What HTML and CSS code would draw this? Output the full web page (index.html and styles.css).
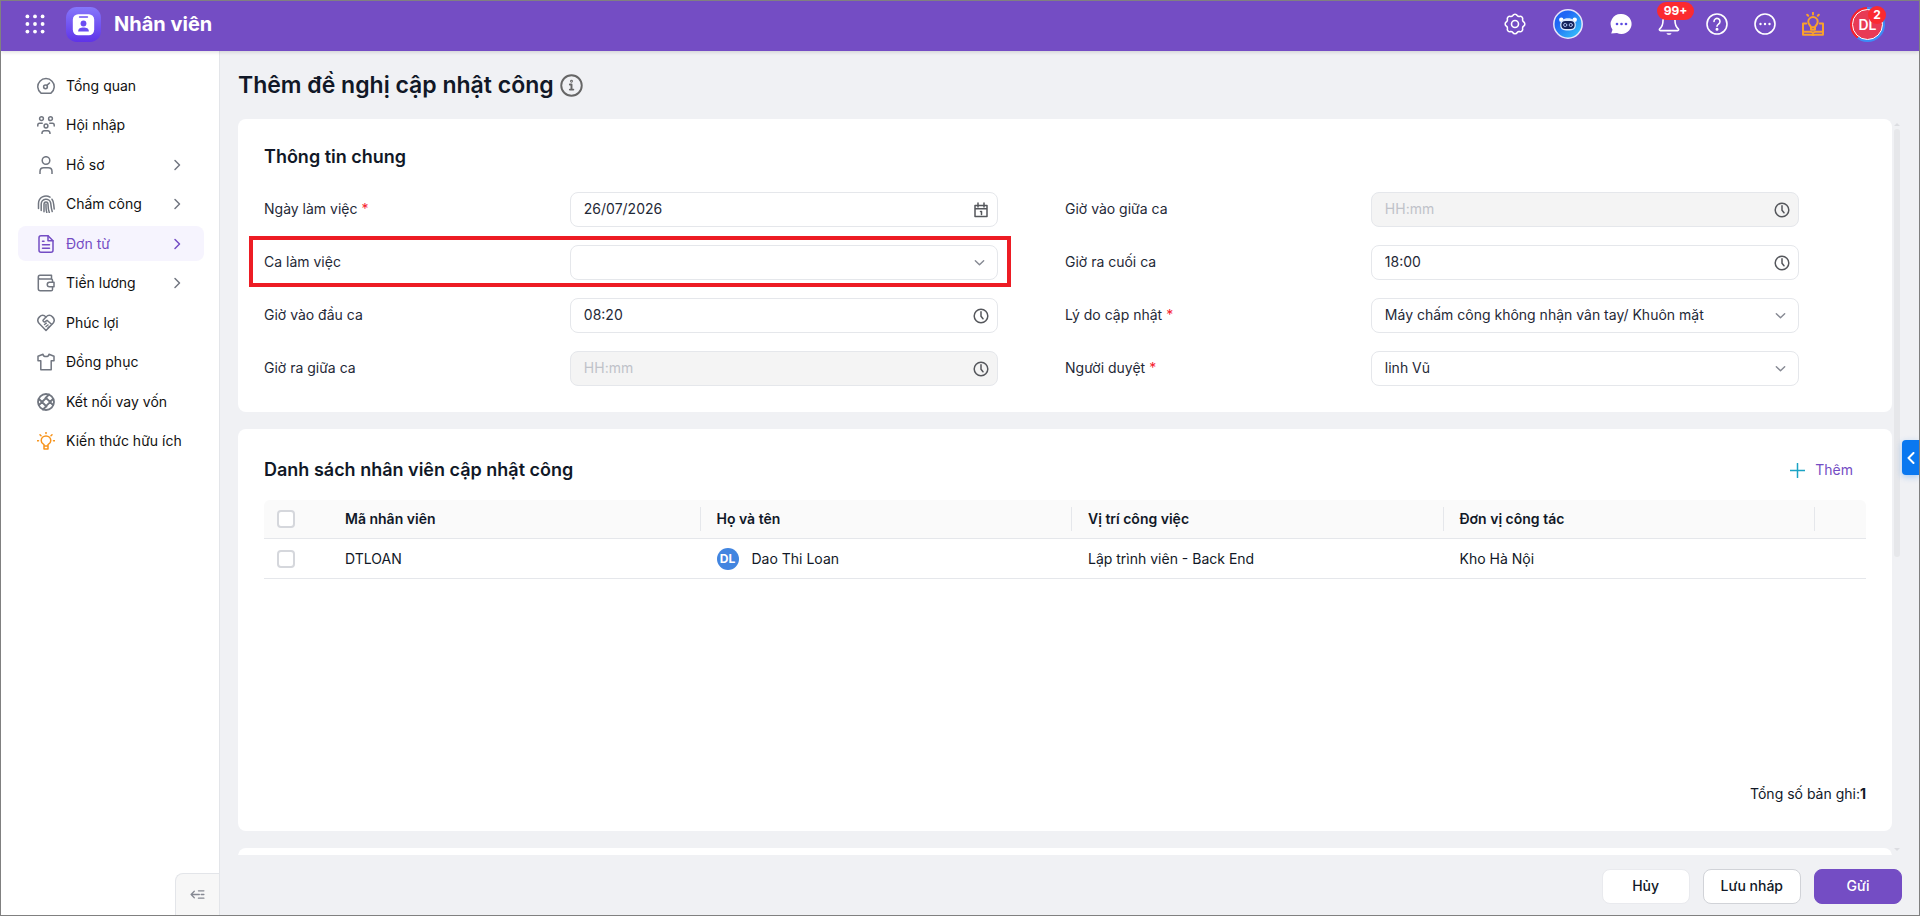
FILE: index.html
```
<!DOCTYPE html>
<html lang="vi">
<head>
    <meta charset="UTF-8">
    <meta name="viewport" content="width=device-width, initial-scale=1.0">
    <title>Thêm đề nghị cập nhật công</title>
    <link rel="stylesheet" href="styles.css">
</head>
<body>
    <!-- shared icons -->
    <svg class="sprite" aria-hidden="true">
        <symbol id="chevron-right" viewBox="0 0 14 14"><path d="M5 2.5 9.5 7 5 11.5"/></symbol>
        <symbol id="chevron-down" viewBox="0 0 14 14"><path d="M2.5 5 7 9.5 11.5 5"/></symbol>
        <symbol id="clock" viewBox="0 0 16 16"><circle cx="8" cy="8" r="6.8"/><path d="M8 3.8V8.2l2 2.6"/></symbol>
    </svg>

    <header class="header">
        <button class="icon-btn" aria-label="Ứng dụng">
            <svg class="dots" viewBox="0 0 20 20"><circle cx="2.4" cy="2.4" r="1.9"/><circle cx="10" cy="2.4" r="1.9"/><circle cx="17.6" cy="2.4" r="1.9"/><circle cx="2.4" cy="10" r="1.9"/><circle cx="10" cy="10" r="1.9"/><circle cx="17.6" cy="10" r="1.9"/><circle cx="2.4" cy="17.6" r="1.9"/><circle cx="10" cy="17.6" r="1.9"/><circle cx="17.6" cy="17.6" r="1.9"/></svg>
        </button>
        <svg class="app-logo" viewBox="0 0 36 36">
            <defs><linearGradient id="logoBg" x1="0" y1="0" x2="0" y2="1"><stop offset="0" stop-color="#8577fb"/><stop offset="1" stop-color="#5f33e8"/></linearGradient></defs>
            <rect width="36" height="36" rx="11" fill="url(#logoBg)"/>
            <rect x="7" y="7.5" width="22" height="21.5" rx="5.5" fill="#fff"/>
            <path d="M14 10.3h8" stroke="#6b4df2" stroke-width="1.6" stroke-linecap="round"/>
            <circle cx="18" cy="17" r="3" fill="#6b4df2"/>
            <path d="M12.5 25.2c0-3.400 2.500-4.200 5.500-4.200s5.500.8 5.500 4.200z" fill="#6b4df2"/>
        </svg>
        <span class="app-name">Nhân viên</span>

        <div class="header-actions">
            <button class="icon-btn" aria-label="Thiết lập">
                <svg viewBox="0 0 22 22"><path d="M8.800 2.500a2.500 2.500 0 0 1 4.400 0 2.400 2.400 0 0 0 2.300.9 2.500 2.500 0 0 1 3.100 3.100 2.400 2.400 0 0 0 .9 2.300 2.500 2.500 0 0 1 0 4.400 2.400 2.400 0 0 0-.9 2.300 2.500 2.500 0 0 1-3.100 3.100 2.400 2.400 0 0 0-2.300.9 2.500 2.500 0 0 1-4.400 0 2.400 2.400 0 0 0-2.300-.9 2.500 2.500 0 0 1-3.100-3.100 2.400 2.400 0 0 0-.9-2.300 2.500 2.500 0 0 1 0-4.400 2.400 2.400 0 0 0 .9-2.300 2.500 2.500 0 0 1 3.100-3.100 2.400 2.400 0 0 0 2.300-.9z"/><circle cx="11" cy="11" r="3.500"/></svg>
            </button>
            <button class="icon-btn bot" aria-label="Trợ lý">
                <svg viewBox="0 0 30 30">
                    <defs><linearGradient id="botBg" x1="0" y1="0" x2="1" y2="1"><stop offset=".3" stop-color="#1f66f5"/><stop offset="1" stop-color="#38d0fb"/></linearGradient></defs>
                    <circle cx="15" cy="15" r="14.200" fill="url(#botBg)" stroke="#e8e6fb" stroke-width="1.500"/>
                    <g stroke="none">
                        <circle cx="8.300" cy="10.800" r="2.200" fill="#fff"/><circle cx="21.700" cy="10.800" r="2.200" fill="#fff"/>
                        <path d="M7.200 16c0-4.500 3-6.800 7.800-6.800s7.800 2.300 7.800 6.800-3 5.500-7.800 5.500-7.800-1-7.800-5.500z" fill="#dbeafe"/>
                        <rect x="8.400" y="12" width="13.200" height="8" rx="4" fill="#14225a"/>
                    </g>
                    <circle cx="12.200" cy="16" r="1.600" stroke="#a5b9e8"/><circle cx="17.800" cy="16" r="1.600" stroke="#a5b9e8"/>
                </svg>
            </button>
            <button class="icon-btn" aria-label="Trò chuyện">
                <svg viewBox="0 0 22 22"><path d="M11.500 1A10 10 0 1 1 7 19.900L1.200 20.600l1.300-3.900A10 10 0 0 1 11.500 1z" fill="#fff" stroke="none"/><g fill="#5b4be0" stroke="none"><circle cx="7" cy="11" r="1.300"/><circle cx="11.500" cy="11" r="1.300"/><circle cx="16" cy="11" r="1.300"/></g></svg>
            </button>
            <button class="icon-btn" aria-label="Thông báo">
                <svg viewBox="0 0 22 22"><path d="M5 7.500a6 6 0 0 1 12 0c0 5 1 6.500 3.300 8.300.7.700.2 1.800-.7 1.800H2.400c-.9 0-1.400-1.100-.7-1.800C4 14 5 12.500 5 7.500z"/><path d="M8.500 20.200h5c-.4 1-1.300 1.600-2.500 1.600s-2.100-.6-2.500-1.600z" fill="#fff" stroke="none"/></svg>
                <span class="badge badge-wide">99+</span>
            </button>
            <button class="icon-btn" aria-label="Trợ giúp">
                <svg viewBox="0 0 22 22"><circle cx="11" cy="11" r="10"/><path d="M8 8.500a3 3 0 1 1 4.600 2.500c-1 .7-1.600 1.100-1.600 2.300"/><circle cx="11" cy="16.200" r=".7" fill="#fff"/></svg>
            </button>
            <button class="icon-btn" aria-label="Thêm nữa">
                <svg viewBox="0 0 22 22"><circle cx="11" cy="11" r="10"/><g fill="#fff" stroke="none"><circle cx="6.500" cy="11" r="1.200"/><circle cx="11" cy="11" r="1.200"/><circle cx="15.500" cy="11" r="1.200"/></g></svg>
            </button>
            <button class="icon-btn guide" aria-label="Kiến thức">
                <svg viewBox="0 0 22 24"><path d="M4.200 11.500H1v11.300h7.500l2.500.2 2.500-.2H21V11.500h-3.200M1 19.800h7c1.600 0 2.500.4 3 1.200.5-.8 1.400-1.200 3-1.200h7"/><path d="M9 15.200c0-1.400-2.700-2.500-2.700-5.400a4.700 4.700 0 0 1 9.400 0c0 2.900-2.700 4-2.700 5.400v2.600H9zM9 15.200h4M11 .8v1.700M5.200 2.800l1 1M16.800 2.800l-1 1"/></svg>
            </button>
            <button class="icon-btn avatar" aria-label="Tài khoản">
                <span class="avatar-face">DL</span>
                <span class="badge badge-round">2</span>
            </button>
        </div>
    </header>

    <div class="layout">
        <aside class="sidebar">
            <nav class="menu">
                <a href="#" class="menu-item"><svg viewBox="0 0 18 18"><path d="M4 16.200A8.200 8.200 0 1 1 14 16.200z"/><circle cx="8.500" cy="9.800" r="1.900"/><path d="M9.900 8.400 12.500 6"/></svg>Tổng quan</a>
                <a href="#" class="menu-item"><svg viewBox="0 0 18 18"><circle cx="4.500" cy="2.700" r="1.900"/><circle cx="13.500" cy="2.700" r="1.900"/><circle cx="9" cy="10" r="1.900"/><path d="M.8 10V9c0-1 .7-1.800 1.700-1.800h2.700M17.200 10V9c0-1-.7-1.800-1.700-1.800h-2.700M5 17.600c0-1.800.8-2.800 2.300-2.800h3.400c1.500 0 2.300 1 2.300 2.800"/></svg>Hội nhập</a>
                <a href="#" class="menu-item"><svg viewBox="0 0 18 18"><circle cx="9" cy="4.500" r="3.800"/><path d="M3 17.700v-2.200c0-2.200 1.500-3.700 3.700-3.700h4.600c2.200 0 3.700 1.500 3.700 3.700v2.200"/></svg>Hồ sơ<svg class="arrow"><use href="#chevron-right"/></svg></a>
                <a href="#" class="menu-item"><svg viewBox="0 0 18 18"><path d="M1.500 13.500V8.500A7.500 7.500 0 0 1 13 2.200M15 4.200c1.200 1.500 1.500 3 1.700 5.300l.5 4.500M4.200 15.500V9a4.800 4.800 0 0 1 9.500-1c.3 2.800.5 5.500 1.500 8.500M7 16.800V9.200c0-2.900 4-2.900 4 0 0 3.300.3 5.500 1.300 8.300M9 9v3c0 2 .2 3.700.8 5.500"/></svg>Chấm công<svg class="arrow"><use href="#chevron-right"/></svg></a>
                <a href="#" class="menu-item active"><svg viewBox="0 0 18 18"><path d="M11 .8H4C2.800.8 2 1.600 2 2.800v12.400c0 1.200.8 2 2 2h10c1.200 0 2-.8 2-2V5.800z"/><path d="M11 .8v5h5M5.500 6.300H7M5.500 9.800h7M5.500 13.300h7"/></svg>Đơn từ<svg class="arrow"><use href="#chevron-right"/></svg></a>
                <a href="#" class="menu-item"><svg viewBox="0 0 18 18"><path d="M15.500 8V6.300c0-.8-.5-1.300-1.300-1.300H3C1.800 5 1.300 4.300 1.300 3.200S2 1.300 3 1.300h11.500V5M1.300 3.200v11.500c0 1.200.8 2 2 2h10.900c.8 0 1.300-.5 1.300-1.300v-2.200"/><path d="M17 8.200h-4.500c-3 0-3 4.600 0 4.600H17z"/></svg>Tiền lương<svg class="arrow"><use href="#chevron-right"/></svg></a>
                <a href="#" class="menu-item"><svg viewBox="0 0 18 18"><path d="M9 16.500 2 9.300C-1.500 5 4.500-1.500 9 3c4.500-4.500 10.500 2 7 6.300z"/><path d="M9 3 6.200 6c-.8 1 .8 2.600 2 1.600L10 6.300l4.500 4M7.500 10.500l1.800-1.300M9 12.500l2-1.500M11 14l1.500-1.500"/></svg>Phúc lợi</a>
                <a href="#" class="menu-item"><svg viewBox="0 0 18 18"><path d="M6 1.300 1 3.200v4.500h2.800v9h10.400v-9H17V3.200l-5-1.900c-.5 3-5.500 3-6 0z"/></svg>Đồng phục</a>
                <a href="#" class="menu-item"><svg class="bold" viewBox="0 0 18 18"><circle cx="9" cy="9" r="8"/><path d="M9.500 4.500 5 9l4.500 4.500M9 4.800 13.200 9 9 13.200M12 1.500 8.500 5M6 16.500 9.500 13M2 6l3 3-3 3M16 6l-3 3 3 3"/></svg>Kết nối vay vốn</a>
                <a href="#" class="menu-item"><svg class="tip" viewBox="0 0 18 18"><path d="M7 14v-1.300C5 11.500 4.200 10.300 4.200 8.700a4.800 4.800 0 0 1 9.600 0c0 1.600-.8 2.800-2.800 4V14zM7 14v3h4v-3M9 0v1.500M3 2.800l1 1M15 2.800l-1 1M.2 8.700h1.300M16.500 8.700h1.300"/></svg>Kiến thức hữu ích</a>
            </nav>
            <button class="collapse" aria-label="Thu gọn">
                <svg viewBox="0 0 16 12"><path d="M1 6h9M4.500 2.500 1 6l3.500 3.500M9 2h6M12 6h3M9 10h6"/></svg>
            </button>
        </aside>

        <main class="main">
            <div class="page-title">
                <h1>Thêm đề nghị cập nhật công</h1>
                <svg viewBox="0 0 24 24"><circle cx="12" cy="12" r="10.700"/><path d="M10.300 11H12v5.200M10.300 16.300h3.600"/><circle cx="12" cy="7.500" r=".5"/></svg>
            </div>

            <div class="scroll-area">
                <div class="cards">
                    <section class="card">
                        <h2>Thông tin chung</h2>
                        <form class="form">
                            <div class="field">
                                <label for="ngayLamViec">Ngày làm việc <em>*</em></label>
                                <div class="control">
                                    <input type="text" id="ngayLamViec" value="26/07/2026">
                                    <svg viewBox="0 0 16 16"><path d="M2 3.500h12v11H2zM2 6.800h12M5 1v4M11 1v4M7.500 9.500h1v3"/></svg>
                                </div>
                            </div>
                            <div class="field highlight">
                                <label for="caLamViec">Ca làm việc</label>
                                <div class="control select">
                                    <select id="caLamViec"><option></option></select>
                                    <svg><use href="#chevron-down"/></svg>
                                </div>
                            </div>
                            <div class="field">
                                <label for="gioVaoDauCa">Giờ vào đầu ca</label>
                                <div class="control">
                                    <input type="text" id="gioVaoDauCa" value="08:20">
                                    <svg><use href="#clock"/></svg>
                                </div>
                            </div>
                            <div class="field">
                                <label for="gioRaGiuaCa">Giờ ra giữa ca</label>
                                <div class="control">
                                    <input type="text" id="gioRaGiuaCa" placeholder="HH:mm" disabled>
                                    <svg><use href="#clock"/></svg>
                                </div>
                            </div>
                            <div class="field">
                                <label for="gioVaoGiuaCa">Giờ vào giữa ca</label>
                                <div class="control">
                                    <input type="text" id="gioVaoGiuaCa" placeholder="HH:mm" disabled>
                                    <svg><use href="#clock"/></svg>
                                </div>
                            </div>
                            <div class="field">
                                <label for="gioRaCuoiCa">Giờ ra cuối ca</label>
                                <div class="control">
                                    <input type="text" id="gioRaCuoiCa" value="18:00">
                                    <svg><use href="#clock"/></svg>
                                </div>
                            </div>
                            <div class="field">
                                <label for="lyDo">Lý do cập nhật <em>*</em></label>
                                <div class="control select">
                                    <select id="lyDo"><option>Máy chấm công không nhận vân tay/ Khuôn mặt</option></select>
                                    <svg><use href="#chevron-down"/></svg>
                                </div>
                            </div>
                            <div class="field">
                                <label for="nguoiDuyet">Người duyệt <em>*</em></label>
                                <div class="control select">
                                    <select id="nguoiDuyet"><option>linh Vũ</option></select>
                                    <svg><use href="#chevron-down"/></svg>
                                </div>
                            </div>
                        </form>
                    </section>

                    <section class="card list-card">
                        <div class="card-head">
                            <h2>Danh sách nhân viên cập nhật công</h2>
                            <button class="add-btn"><svg viewBox="0 0 16 16"><path d="M8 .5v15M.5 8h15"/></svg>Thêm</button>
                        </div>
                        <table>
                            <thead>
                                <tr>
                                    <th class="col-check"><input type="checkbox" aria-label="Chọn tất cả"></th>
                                    <th><div class="th-text">Mã nhân viên</div></th>
                                    <th><div class="th-text">Họ và tên</div></th>
                                    <th><div class="th-text">Vị trí công việc</div></th>
                                    <th><div class="th-text">Đơn vị công tác</div></th>
                                    <th class="col-end"></th>
                                </tr>
                            </thead>
                            <tbody>
                                <tr>
                                    <td class="col-check"><input type="checkbox" aria-label="Chọn DTLOAN"></td>
                                    <td>DTLOAN</td>
                                    <td><div class="person"><span class="initials">DL</span>Dao Thi Loan</div></td>
                                    <td>Lập trình viên - Back End</td>
                                    <td>Kho Hà Nội</td>
                                    <td class="col-end"></td>
                                </tr>
                            </tbody>
                        </table>
                        <p class="total">Tổng số bản ghi:<b>1</b></p>
                    </section>

                    <section class="card"></section>
                </div>
                <div class="scrollbar">
                    <span class="arrow-up"></span>
                    <span class="thumb"></span>
                    <span class="arrow-down"></span>
                </div>
            </div>

            <footer class="footer">
                <button class="btn btn-plain">Hủy</button>
                <button class="btn btn-outline">Lưu nháp</button>
                <button class="btn btn-primary">Gửi</button>
            </footer>
        </main>
    </div>

    <button class="side-tab" aria-label="Mở rộng"><svg viewBox="0 0 8 12"><path d="M6.500 1 1.500 6l5 5"/></svg></button>
</body>
</html>
```
FILE: styles.css
```
* {
    box-sizing: border-box;
}
body {
    margin: 0;
    height: 100vh;
    display: flex;
    flex-direction: column;
    position: relative;
    overflow: hidden;
    border: 1px solid #808080;
    background: #f0f1f4;
    color: #111827;
    font-family: Inter, sans-serif;
    font-size: 14px;
    line-height: 20px;
}
button, input, select {
    font: inherit;
    color: inherit;
}
button {
    padding: 0;
    border: none;
    background: none;
    cursor: pointer;
}
svg {
    display: block;
    flex: none;
    fill: none;
    stroke: currentColor;
    stroke-linecap: round;
    stroke-linejoin: round;
}
.sprite {
    position: absolute;
    width: 0;
    height: 0;
}

/* header */
.header {
    flex: none;
    display: flex;
    align-items: center;
    height: 50px;
    padding: 0 34px 4px 24px;
    background: #744dc4;
    color: #fff;
    box-shadow: 0 1px 4px rgba(0, 0, 0, 0.15);
    z-index: 1;
}
.icon-btn {
    position: relative;
    display: flex;
    color: #fff;
}
.icon-btn svg {
    width: 22px;
    height: 22px;
    stroke-width: 1.6;
}
.icon-btn .dots {
    width: 20px;
    height: 20px;
    fill: #fff;
    stroke: none;
}
.app-logo {
    width: 35px;
    height: 35px;
    margin: 0 13px 0 21px;
    stroke: none;
}
.app-name {
    font-size: 20px;
    font-weight: 700;
}
.header-actions {
    display: flex;
    align-items: center;
    gap: 26px;
    margin-left: auto;
}
.bot {
    margin: 0 1px;
}
.bot svg {
    width: 30px;
    height: 30px;
    stroke-width: 1;
}
.guide {
    color: #f9a12c;
}
.guide svg {
    height: 24px;
    stroke-width: 2;
}
.badge {
    position: absolute;
    height: 18px;
    border-radius: 9px;
    background: #fb2a2f;
    color: #fff;
    font-size: 12px;
    font-weight: 700;
    line-height: 18px;
    text-align: center;
}
.badge-wide {
    top: -11px;
    left: -1px;
    width: 37px;
}
.badge-round {
    top: -1px;
    right: -1px;
    width: 18px;
}
.avatar {
    width: 35px;
    height: 35px;
    padding: 2px;
    border-radius: 50%;
    background: conic-gradient(#3b8cf6 0 60%, #f5222d 60%);
}
.avatar-face {
    flex: 1;
    border: 1px solid #fff;
    border-radius: 50%;
    background: #e83a55;
    font-size: 14px;
    font-weight: 600;
    line-height: 29px;
}

.layout {
    flex: 1;
    display: flex;
    min-height: 0;
}

/* sidebar */
.sidebar {
    flex: none;
    display: flex;
    flex-direction: column;
    width: 219px;
    border-right: 1px solid #e3e5e9;
    background: #fff;
}
.menu {
    display: flex;
    flex-direction: column;
    justify-content: space-between;
    height: 391px;
    margin: 17px 15px 0 17px;
}
.menu-item {
    display: flex;
    align-items: center;
    gap: 11px;
    height: 35px;
    padding: 0 20px 0 19px;
    border-radius: 8px;
    color: #111;
    text-decoration: none;
    white-space: nowrap;
}
.menu-item svg {
    width: 18px;
    height: 18px;
    color: #717680;
    stroke-width: 1.5;
}
.menu-item .bold {
    stroke-width: 1.8;
}
.menu-item .tip {
    color: #f7941d;
}
.menu-item .arrow {
    width: 14px;
    height: 14px;
    margin-left: auto;
}
.menu-item.active {
    background: #f6f4fe;
}
.menu-item.active, .menu-item.active svg {
    color: #744dc4;
}
.collapse {
    display: flex;
    align-items: center;
    justify-content: center;
    align-self: flex-end;
    width: 44px;
    height: 42px;
    margin-top: auto;
    border: solid #e3e5e9;
    border-width: 1px 0 0 1px;
    border-radius: 8px 0 0 0;
    background: #f7f7f7;
    color: #868993;
}
.collapse svg {
    width: 15px;
    height: 11px;
    stroke-width: 1.4;
}

/* page */
.main {
    flex: 1;
    display: flex;
    flex-direction: column;
    min-width: 0;
    padding-left: 18px;
}
.page-title {
    display: flex;
    align-items: center;
    gap: 6px;
    height: 68px;
}
h1, h2 {
    margin: 0;
    font-weight: 600;
}
h1 {
    font-size: 23px;
    line-height: 32px;
}
h2 {
    font-size: 18px;
    line-height: 24px;
}
.page-title svg {
    width: 23px;
    height: 23px;
    color: #666;
    stroke-width: 2;
}
.scroll-area {
    flex: 1;
    display: flex;
    gap: 2px;
    min-height: 0;
    padding-right: 19px;
    overflow: hidden;
}
.cards {
    flex: 1;
    display: flex;
    flex-direction: column;
    gap: 17px;
    min-width: 0;
}
.card {
    flex: none;
    padding: 26px;
    border-radius: 8px;
    background: #fff;
}
.scrollbar {
    display: flex;
    flex-direction: column;
    align-items: center;
    width: 6px;
    padding: 4px 0;
}
.thumb {
    width: 6px;
    height: 428px;
    margin-top: 3px;
    border-radius: 3px;
    background: #e6e7ea;
}
.arrow-up, .arrow-down {
    border: 3px solid transparent;
    border-top: none;
    border-bottom-color: #dcdde1;
}
.arrow-down {
    margin-top: auto;
    border-top: 3px solid #dcdde1;
    border-bottom: none;
}

/* form */
.form {
    display: grid;
    grid-template-columns: 1fr 1fr;
    grid-template-rows: repeat(4, 35px);
    grid-auto-flow: column;
    gap: 18px 67px;
    margin-top: 23px;
    padding-right: 67px;
}
.field {
    display: grid;
    grid-template-columns: 5fr 7fr;
    align-items: center;
    position: relative;
    color: #1f2937;
}
.field label {
    padding-bottom: 2px;
}
.field em {
    color: #f5222d;
    font-style: normal;
}
.highlight::after {
    content: "";
    position: absolute;
    inset: -9px -13px -7px -15px;
    border: 4px solid #ed1c24;
    pointer-events: none;
}
.control {
    display: flex;
    align-items: center;
    position: relative;
}
.control input, .control select {
    appearance: none;
    width: 100%;
    height: 35px;
    padding: 0 40px 2px 13px;
    border: 1px solid #e5e7eb;
    border-radius: 8px;
    background: #fff;
    opacity: 1;
}
.control input:disabled {
    background: #f4f4f4;
}
.control input::placeholder {
    color: #bfc2c9;
}
.control svg {
    position: absolute;
    right: 9px;
    width: 16px;
    height: 16px;
    color: #55575c;
    stroke-width: 1.5;
    pointer-events: none;
}
.control.select svg {
    right: 12px;
    width: 13px;
    height: 13px;
    color: #868993;
}

/* employee list */
.list-card {
    display: flex;
    flex-direction: column;
    min-height: 402px;
    padding-top: 29px;
}
.card-head {
    display: flex;
    align-items: center;
    justify-content: space-between;
    padding-right: 13px;
}
.add-btn {
    display: flex;
    align-items: center;
    gap: 10px;
    color: #744dc4;
}
.add-btn svg {
    width: 15px;
    height: 15px;
    color: #1aa3c4;
    stroke-width: 1.6;
}
table {
    width: 100%;
    margin-top: 18px;
    border-collapse: separate;
    border-spacing: 0;
    table-layout: fixed;
}
th, td {
    height: 40px;
    padding: 0 0 0 16px;
    border-bottom: 1px solid #e5e7eb;
    text-align: left;
}
th {
    height: 39px;
    padding-left: 0;
    background: #fafafa;
    font-weight: 600;
}
th:first-child {
    border-top-left-radius: 6px;
}
th:last-child {
    border-top-right-radius: 6px;
}
.th-text {
    padding-left: 16px;
    border-right: 1px solid #e5e7eb;
    line-height: 24px;
}
.col-check {
    width: 65px;
    padding-left: 13px;
}
.col-end {
    width: 51px;
}
table input {
    appearance: none;
    display: block;
    width: 18px;
    height: 18px;
    margin: 0;
    border: 2px solid #d5d7dc;
    border-radius: 4px;
    background: #fff;
}
.person {
    display: flex;
    align-items: center;
    gap: 13px;
}
.initials {
    width: 22px;
    height: 22px;
    border-radius: 50%;
    background: #4285e0;
    color: #fff;
    font-size: 12px;
    font-weight: 700;
    line-height: 22px;
    text-align: center;
}
.total {
    margin: auto 0 0;
    padding-bottom: 1px;
    text-align: right;
}

/* footer */
.footer {
    flex: none;
    display: flex;
    align-items: center;
    justify-content: flex-end;
    gap: 13px;
    height: 60px;
    padding: 2px 17px 0 0;
}
.btn {
    min-width: 88px;
    height: 35px;
    padding: 0 17px;
    border: 1px solid #e9eaee;
    border-radius: 8px;
    background: #fff;
    font-weight: 500;
}
.btn-outline {
    border-color: #d1d3d8;
}
.btn-primary {
    border-color: #744dc4;
    background: #744dc4;
    color: #fff;
}

/* panel handle on the right edge */
.side-tab {
    position: absolute;
    top: 439px;
    right: 0;
    display: flex;
    align-items: center;
    justify-content: center;
    width: 17px;
    height: 35px;
    border-radius: 4px 0 0 4px;
    background: #0a78f0;
    color: #fff;
    box-shadow: 0 2px 6px rgba(10, 120, 240, 0.3);
}
.side-tab svg {
    width: 8px;
    height: 12px;
    stroke-width: 2;
}
```
